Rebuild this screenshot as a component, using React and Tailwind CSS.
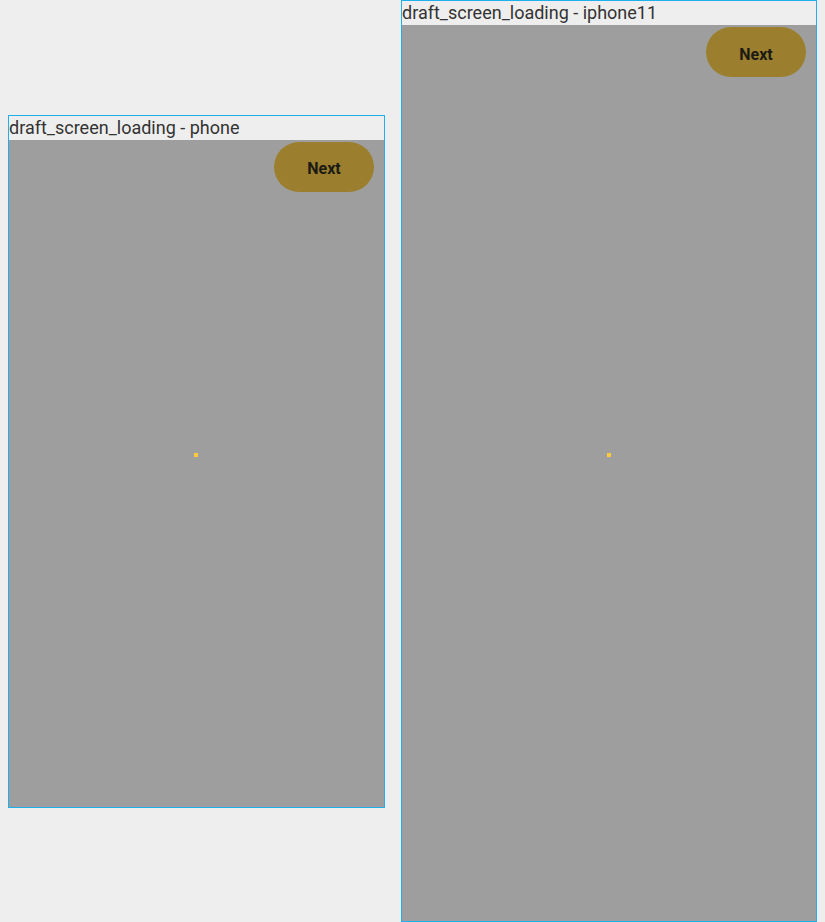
import React from 'react';

const Frame = ({ title, width, height, dotLeft, dotTop }) => (
  <div className="flex flex-col border border-[#1eb0ee] bg-[#eeeeee]">
    <div className="h-6 flex items-center text-[18px] leading-6 text-[#333333] whitespace-nowrap">
      {title}
    </div>
    <div className="relative bg-[#9e9e9e]" style={{ width, height }}>
      <div className="flex justify-end pt-0.5 pr-2.5">
        <button className="w-[100px] h-[50px] pt-[5px] rounded-full bg-[#9b7f2e] text-[16px] font-bold text-[#1c1a14]">
          Next
        </button>
      </div>
      <div className="absolute w-1 h-1 bg-[#ffc83d]" style={{ left: dotLeft, top: dotTop }} />
    </div>
  </div>
);

export default function App() {
  return (
    <div className="w-[825px] h-[922px] bg-[#eeeeee] flex items-center gap-4 pl-2 font-['Roboto',sans-serif]">
      <Frame title="draft_screen_loading - phone" width={375} height={667} dotLeft={185} dotTop={313} />
      <Frame title="draft_screen_loading - iphone11" width={414} height={896} dotLeft={205} dotTop={428} />
    </div>
  );
}
